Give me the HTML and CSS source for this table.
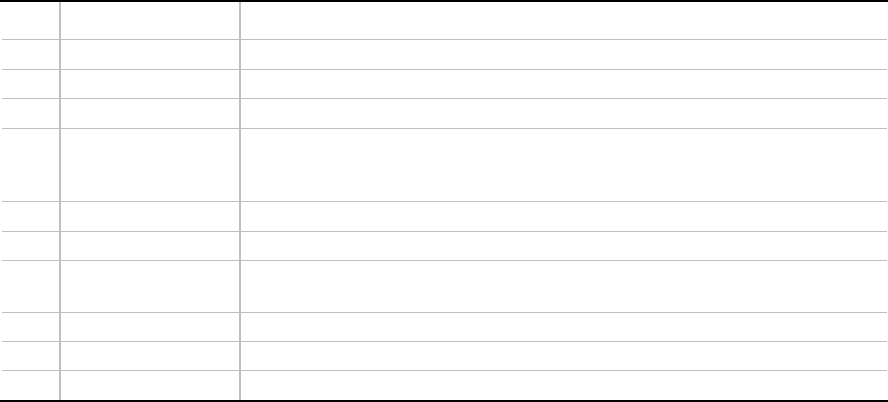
FILE: index.html
```html
<!DOCTYPE html>
<html>
<head>
<meta charset="utf-8">
<link rel="stylesheet" href="styles.css">
</head>
<body>
<div class="table">
  <div class="row h38"><div class="c1"></div><div class="c2"></div><div class="c3"></div></div>
  <div class="row h30"><div class="c1"></div><div class="c2"></div><div class="c3"></div></div>
  <div class="row h29"><div class="c1"></div><div class="c2"></div><div class="c3"></div></div>
  <div class="row h30"><div class="c1"></div><div class="c2"></div><div class="c3"></div></div>
  <div class="row h73"><div class="c1"></div><div class="c2"></div><div class="c3"></div></div>
  <div class="row h30"><div class="c1"></div><div class="c2"></div><div class="c3"></div></div>
  <div class="row h29"><div class="c1"></div><div class="c2"></div><div class="c3"></div></div>
  <div class="row h52"><div class="c1"></div><div class="c2"></div><div class="c3"></div></div>
  <div class="row h29"><div class="c1"></div><div class="c2"></div><div class="c3"></div></div>
  <div class="row h29"><div class="c1"></div><div class="c2"></div><div class="c3"></div></div>
  <div class="row last"><div class="c1"></div><div class="c2"></div><div class="c3"></div></div>
</div>
</body>
</html>
```
FILE: styles.css
```css
html, body {
  margin: 0;
  padding: 0;
  background: #fff;
  font-family: "Liberation Sans", Arial, sans-serif;
}
.table {
  box-sizing: border-box;
  height: 402px;
  border-top: 2px solid #000;
  border-bottom: 2px solid #000;
  display: flex;
  flex-direction: column;
}
.row {
  box-sizing: border-box;
  display: grid;
  grid-template-columns: 59px 180px 1fr;
  margin: 0 1px 0 2px;
  border-bottom: 1px solid #c0c0c0;
}
.row.last {
  flex: 1;
  border-bottom: none;
}
.c1, .c2 {
  border-right: 2px solid #c0c0c0;
}
.h29 { height: 29px; }
.h30 { height: 30px; }
.h38 { height: 38px; }
.h52 { height: 52px; }
.h73 { height: 73px; }
```
